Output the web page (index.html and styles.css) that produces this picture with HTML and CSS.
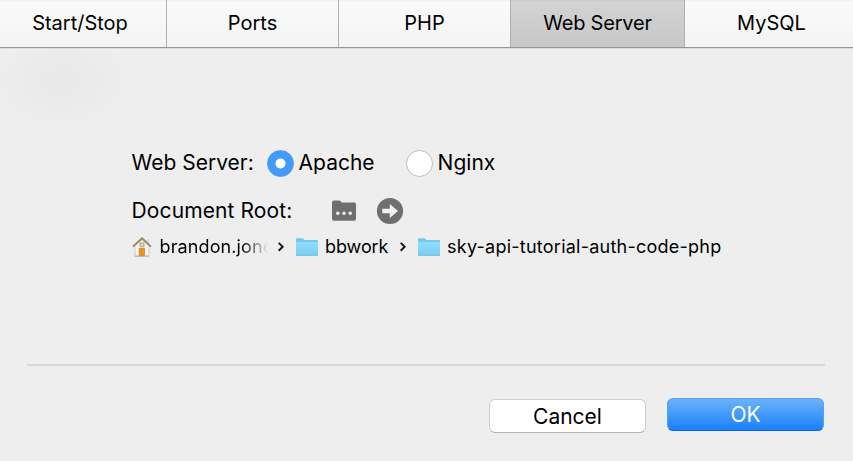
FILE: index.html
```html
<!DOCTYPE html>
<html lang="en">
<head>
<meta charset="utf-8">
<title>Web Server</title>
<link rel="stylesheet" href="styles.css">
</head>
<body>
<svg class="defs" width="0" height="0" aria-hidden="true">
  <defs>
    <linearGradient id="folder-fill" x1="0" y1="0" x2="0" y2="1">
      <stop offset="0" stop-color="#92dcfa"/>
      <stop offset="1" stop-color="#78cff5"/>
    </linearGradient>
    <symbol id="folder" viewBox="0 0 22 18">
      <path d="M0 1.2Q0 .2 1 .2H6.4Q7.2 .2 7.6 1L8.2 1.9H21Q22 1.9 22 2.9V17.2H0Z" fill="#74caec"/>
      <path d="M0 4H22V17.2H0Z" fill="url(#folder-fill)"/>
      <path d="M0 17.3H22" stroke="#65b8da" stroke-width=".8"/>
    </symbol>
  </defs>
</svg>
<div class="window">
  <nav class="tabs">
    <div class="tab">Start/Stop</div>
    <div class="tab">Ports</div>
    <div class="tab">PHP</div>
    <div class="tab selected">Web Server</div>
    <div class="tab">MySQL</div>
  </nav>
  <main class="panel">
    <div class="row server">
      <span class="label">Web Server:</span>
      <span class="radio on"></span>
      <span class="apache">Apache</span>
      <span class="radio"></span>
      <span class="nginx">Nginx</span>
    </div>
    <div class="row root">
      <span class="label">Document Root:</span>
      <svg class="choose" width="24" height="22" viewBox="0 0 24 22">
        <path d="M0 2.2Q0 .6 1.6 .6H7.2Q8.4 .6 9 1.6L9.5 2.4H22.2Q24 2.4 24 4.2V18.8Q24 20.7 22 20.7H2Q0 20.7 0 18.8Z" fill="#6f6f6f"/>
        <circle cx="5.8" cy="13.2" r="1.7" fill="#f2f2f2"/><circle cx="12" cy="13.2" r="1.7" fill="#f2f2f2"/><circle cx="18.2" cy="13.2" r="1.7" fill="#f2f2f2"/>
      </svg>
      <svg class="go" width="28" height="28" viewBox="0 0 28 28">
        <circle cx="14" cy="14" r="13.1" fill="#6f6f6f"/>
        <path d="M6.3 11.7H13.8V7L22 14L13.8 21V16.3H6.3Z" fill="#f2f2f2"/>
      </svg>
    </div>
    <div class="row path">
      <svg class="house" width="20" height="20" viewBox="0 0 20 20">
        <path d="M3 9L10 2.5L17 9V19H3Z" fill="#f4f3f1" stroke="#c5c3c0" stroke-width=".8"/>
        <path d="M15 2H17V7L15 5Z" fill="#dedbd7"/>
        <path d="M.9 9.6L10 1.3L19.1 9.6" fill="none" stroke="#a08468" stroke-width="1.9"/>
        <rect x="8" y="6" width="4" height="3.3" fill="#eed9b8" stroke="#a89278" stroke-width=".8"/>
        <rect x="7.2" y="11.2" width="5.2" height="7.6" fill="#f5920c" stroke="#b98547" stroke-width=".8"/>
        <path d="M2.5 19.2H17.5" stroke="#aaa" stroke-width=".8"/>
      </svg>
      <span class="user">brandon.jone</span>
      <svg class="chev c1" width="8" height="10" viewBox="0 0 8 10"><path d="M1.7 .9L5.7 4.8L1.7 8.7" fill="none" stroke="#111" stroke-width="1.9"/></svg>
      <svg class="folder" width="22" height="18"><use href="#folder"/></svg>
      <span class="work">bbwork</span>
      <svg class="chev c2" width="8" height="10" viewBox="0 0 8 10"><path d="M1.7 .9L5.7 4.8L1.7 8.7" fill="none" stroke="#111" stroke-width="1.9"/></svg>
      <svg class="folder" width="22" height="18"><use href="#folder"/></svg>
      <span class="project">sky-api-tutorial-auth-code-php</span>
    </div>
  </main>
  <footer class="actions">
    <button class="btn cancel">Cancel</button>
    <button class="btn ok">OK</button>
  </footer>
</div>
</body>
</html>
```
FILE: styles.css
```css
* { box-sizing: border-box; }
body { margin: 0; background: #eee; overflow: hidden; }
.defs { display: block; }
.window {
  width: 853px; height: 461px;
  display: flex; flex-direction: column;
  font: 21px/24px Inter, "Liberation Sans", sans-serif;
  color: #000; white-space: nowrap;
  background: radial-gradient(ellipse 72px 50px at 62px 81px, #e9e9e9 0, #eaeaea 35%, #eee 100%), #eee;
}
.tabs {
  flex: none; height: 48px; font-size: 20px;
  display: grid; grid-template-columns: 167px 172px 172px 174px 168px;
  border-bottom: 1px solid #949494;
  box-shadow: 0 1px #ddd;
}
.tab {
  display: flex; justify-content: center; padding-top: 11px;
  border-right: 1px solid #b0b0b0;
  background: linear-gradient(#eee 0, #fafafa 2px, #f4f4f4 100%);
}
.tab:last-child { border-right: 0; padding-left: 5px; }
.tab:first-child { padding-right: 6px; }
.tab.selected { letter-spacing: -.2px; background: linear-gradient(#c8c8c8 0, #d3d3d3 2px, #c7c7c7 100%); }
.panel { height: 318px; margin: 0 28px 0 27px; padding: 100px 0 0 104.6px; border-bottom: 2px solid #d8d8d8; }
.row { display: flex; align-items: center; }
.server { height: 30px; }
.server .label { width: 135px; }
.radio { flex: none; width: 27px; height: 27px; border-radius: 50%; background: #fff; border: 1px solid #bcbcbc; }
.radio.on { background: radial-gradient(circle, #fff 4.6px, #429bfa 5.4px); border-color: #4a99ef; }
.apache { width: 107px; margin-left: 5px; }
.nginx { margin-left: 5px; }
.root { height: 30px; margin-top: 18px; }
.root .label { width: 200.4px; letter-spacing: .1px; }
.go { margin-left: 20.5px; }
.path { height: 24px; margin-top: 9px; font-size: 18px; }
.path svg { flex: none; }
.user {
  width: 108px; margin-left: 8px; letter-spacing: .1px;
  -webkit-mask-image: linear-gradient(90deg, #000 82px, transparent 108px);
  mask-image: linear-gradient(90deg, #000 82px, transparent 108px);
}
.c1 { margin: 0 11px 0 9px; }
.work { width: 66px; margin-left: 7.5px; letter-spacing: -.1px; }
.c2 { margin: 0 11px 0 7.5px; }
.project { margin-left: 7.5px; letter-spacing: .24px; }
.actions { display: flex; padding: 32px 0 0 489px; gap: 21px; }
.btn { width: 157px; height: 34px; margin: 0; padding: 0; border: 0; border-radius: 6px; font: inherit; }
.cancel { margin-top: 1px; padding-top: 1px; background: #fff; border: 1px solid #cdcdcd; border-bottom-color: #b2b2b2; }
.ok { color: #fff; height: 33px; background: linear-gradient(#6bb3f8, #1a7ffd); border: 1px solid #559ff0; border-bottom-color: #0a65f0; }
```
